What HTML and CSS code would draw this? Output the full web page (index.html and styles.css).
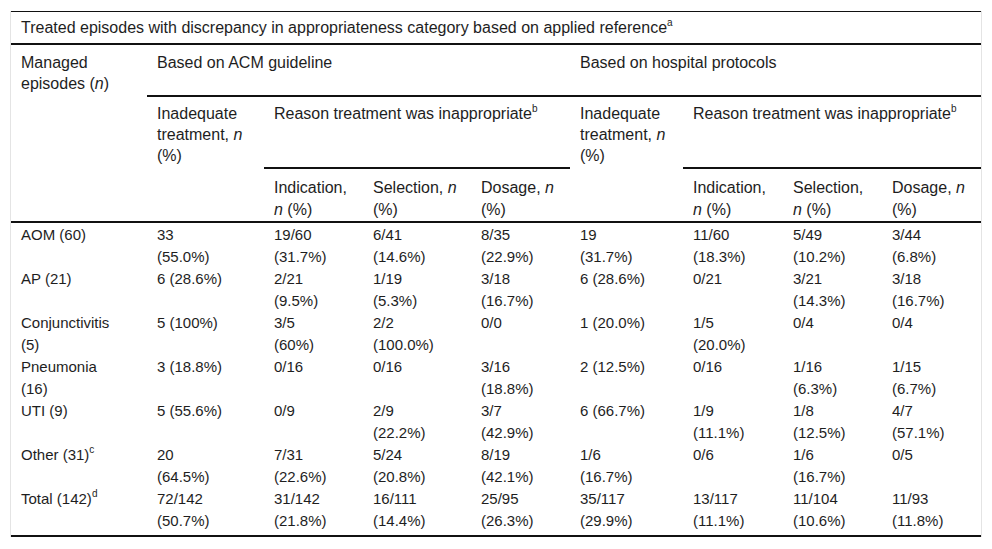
FILE: index.html
```html
<!DOCTYPE html>
<html lang="en">
<head>
<meta charset="utf-8">
<title>Treated episodes with discrepancy</title>
<link rel="stylesheet" href="styles.css">
</head>
<body>
<div class="wrap">
<table class="tbl">
<colgroup>
<col class="c1"><col class="c2"><col class="c3"><col class="c4"><col class="c5"><col class="c6"><col class="c7"><col class="c8"><col class="c9">
</colgroup>
<thead>
<tr class="r-title">
<th colspan="9" class="title">Treated episodes with discrepancy in appropriateness category based on applied reference<sup>a</sup></th>
</tr>
<tr class="r-group">
<th rowspan="3" class="managed">Managed<br>episodes (<i>n</i>)</th>
<th colspan="4" class="group">Based on ACM guideline</th>
<th colspan="4" class="group">Based on hospital protocols</th>
</tr>
<tr class="r-sub">
<th rowspan="2" class="inad">Inadequate<br>treatment, <i>n</i><br>(%)</th>
<th colspan="3" class="reason">Reason treatment was inappropriate<sup>b</sup></th>
<th rowspan="2" class="inad">Inadequate<br>treatment, <i>n</i><br>(%)</th>
<th colspan="3" class="reason">Reason treatment was inappropriate<sup>b</sup></th>
</tr>
<tr class="r-leaf">
<th class="leaf">Indication,<br><i>n</i> (%)</th>
<th class="leaf">Selection, <i>n</i><br>(%)</th>
<th class="leaf">Dosage, <i>n</i><br>(%)</th>
<th class="leaf">Indication,<br><i>n</i> (%)</th>
<th class="leaf">Selection,<br><i>n</i> (%)</th>
<th class="leaf">Dosage, <i>n</i><br>(%)</th>
</tr>
</thead>
<tbody>
<tr>
<td>AOM (60)</td><td>33<br>(55.0%)</td><td>19/60<br>(31.7%)</td><td>6/41<br>(14.6%)</td><td>8/35<br>(22.9%)</td><td>19<br>(31.7%)</td><td>11/60<br>(18.3%)</td><td>5/49<br>(10.2%)</td><td>3/44<br>(6.8%)</td>
</tr>
<tr>
<td>AP (21)</td><td>6 (28.6%)</td><td>2/21<br>(9.5%)</td><td>1/19<br>(5.3%)</td><td>3/18<br>(16.7%)</td><td>6 (28.6%)</td><td>0/21</td><td>3/21<br>(14.3%)</td><td>3/18<br>(16.7%)</td>
</tr>
<tr>
<td>Conjunctivitis<br>(5)</td><td>5 (100%)</td><td>3/5<br>(60%)</td><td>2/2<br>(100.0%)</td><td>0/0</td><td>1 (20.0%)</td><td>1/5<br>(20.0%)</td><td>0/4</td><td>0/4</td>
</tr>
<tr>
<td>Pneumonia<br>(16)</td><td>3 (18.8%)</td><td>0/16</td><td>0/16</td><td>3/16<br>(18.8%)</td><td>2 (12.5%)</td><td>0/16</td><td>1/16<br>(6.3%)</td><td>1/15<br>(6.7%)</td>
</tr>
<tr>
<td>UTI (9)</td><td>5 (55.6%)</td><td>0/9</td><td>2/9<br>(22.2%)</td><td>3/7<br>(42.9%)</td><td>6 (66.7%)</td><td>1/9<br>(11.1%)</td><td>1/8<br>(12.5%)</td><td>4/7<br>(57.1%)</td>
</tr>
<tr>
<td>Other (31)<sup>c</sup></td><td>20<br>(64.5%)</td><td>7/31<br>(22.6%)</td><td>5/24<br>(20.8%)</td><td>8/19<br>(42.1%)</td><td>1/6<br>(16.7%)</td><td>0/6</td><td>1/6<br>(16.7%)</td><td>0/5</td>
</tr>
<tr class="last">
<td>Total (142)<sup>d</sup></td><td>72/142<br>(50.7%)</td><td>31/142<br>(21.8%)</td><td>16/111<br>(14.4%)</td><td>25/95<br>(26.3%)</td><td>35/117<br>(29.9%)</td><td>13/117<br>(11.1%)</td><td>11/104<br>(10.6%)</td><td>11/93<br>(11.8%)</td>
</tr>
</tbody>
</table>
</div>
</body>
</html>
```

FILE: styles.css
```css
html, body {
  margin: 0;
  padding: 0;
  background: #ffffff;
}

body {
  font-family: "Liberation Sans", Arial, sans-serif;
  font-size: 15px;
  line-height: 22px;
  color: #1e1e1e;
}

.wrap {
  margin: 11px 0 0 10px;
  width: 970px;
  border-left: 1px solid #e4e4e4;
  border-right: 1px solid #e4e4e4;
}

.tbl {
  width: 970px;
  table-layout: fixed;
  border-collapse: separate;
  border-spacing: 0;
  border-top: 1px solid #111111;
  border-bottom: 2px solid #111111;
}

.c1 { width: 136px; }
.c2 { width: 117px; }
.c3 { width: 99px; }
.c4 { width: 108px; }
.c5 { width: 99px; }
.c6 { width: 113px; }
.c7 { width: 100px; }
.c8 { width: 99px; }
.c9 { width: 99px; }

th, td {
  text-align: left;
  vertical-align: top;
  font-weight: normal;
  white-space: nowrap;
  padding: 0 10px;
}

th {
  font-size: 16px;
  line-height: 21px;
}

i {
  font-style: italic;
}

sup {
  font-size: 10px;
  line-height: 0;
  vertical-align: 7px;
}

.title {
  padding-top: 5px;
  padding-bottom: 5px;
  border-bottom: 2px solid #111111;
}

.managed {
  padding-top: 7px;
}

.group {
  height: 52px;
  box-sizing: border-box;
  padding-top: 7px;
  border-bottom: 2px solid #111111;
}

.inad {
  padding-top: 6px;
}

.reason {
  height: 72px;
  box-sizing: border-box;
  padding-top: 6px;
  border-bottom: 2px solid #111111;
}

.leaf {
  height: 52px;
  box-sizing: border-box;
  padding-top: 8px;
  line-height: 22px;
}

tbody td {
  padding-top: 0;
  padding-bottom: 0;
}

tbody tr:first-child td {
  border-top: 2px solid #111111;
  padding-top: 1px;
}

tbody tr.last td {
  padding-bottom: 3px;
}
```
